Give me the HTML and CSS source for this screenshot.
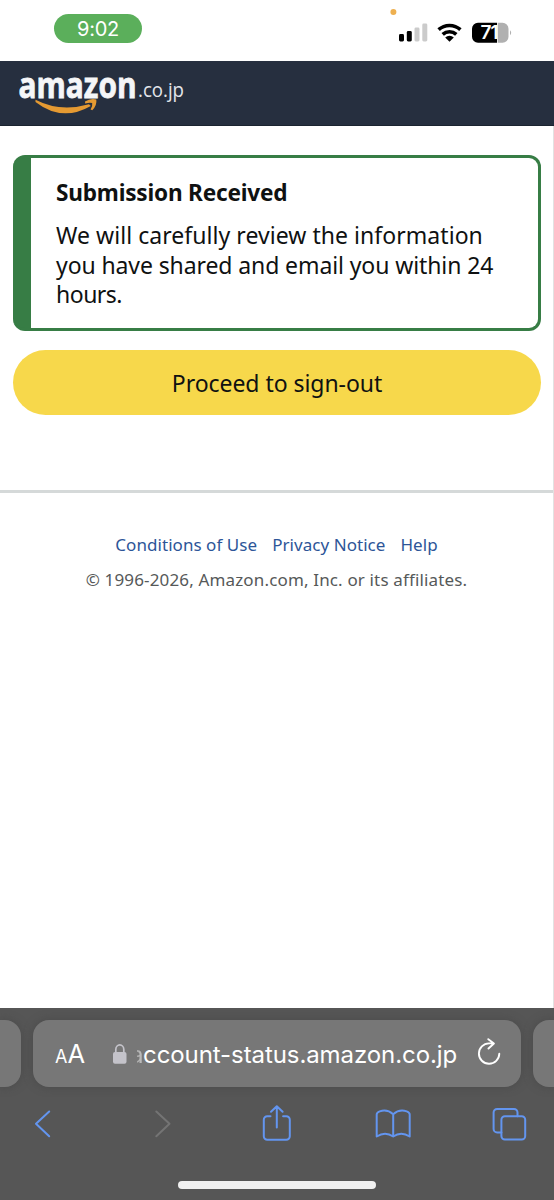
FILE: index.html
```html
<!DOCTYPE html>
<html lang="en">
<head>
<meta charset="utf-8">
<title>Submission Received</title>
<link rel="stylesheet" href="styles.css">
</head>
<body>
<div class="screen">
  <header class="status">
    <span class="clock">9:02</span>
    <svg class="indicators" width="120" height="40" viewBox="0 0 120 40" aria-hidden="true">
      <circle cx="3.4" cy="7" r="3" fill="#eeb050"/>
      <rect x="9" y="29" width="5" height="7.5" rx="1.4"/>
      <rect x="16.8" y="26" width="5" height="10.5" rx="1.4"/>
      <rect x="24.5" y="22.5" width="5" height="14" rx="1.4" fill="#cbcbcb"/>
      <rect x="32.3" y="18.5" width="5" height="18" rx="1.4" fill="#cbcbcb"/>
      <g fill="none" stroke="#000" stroke-width="3.6">
        <path d="M48.6 24.7a16.2 16.2 0 0 1 21.8 0"/>
        <path d="M52.7 29.3a10.2 10.2 0 0 1 13.6 0"/>
      </g>
      <path d="M59.5 36.7l-4.3-4.2a6.2 6.2 0 0 1 8.6 0z"/>
      <path d="M88 17.8h19v20H88a6 6 0 0 1-6-6v-8a6 6 0 0 1 6-6z"/>
      <path d="M107.7 17.8h4.8a6 6 0 0 1 6 6v8a6 6 0 0 1-6 6h-4.8z" fill="#b0b0b0"/>
      <text class="charge" x="90.5" y="34.3" textLength="18">71</text>
      <path d="M120 25.3q2.4 2.5 0 5z" fill="#b0b0b0"/>
    </svg>
  </header>
  <div class="brand">
    <svg width="180" height="55" viewBox="0 0 180 55" role="img" aria-label="amazon.co.jp">
      <text class="brand-name" x="8.5" y="33" textLength="118" lengthAdjust="spacingAndGlyphs">amazon</text>
      <text class="brand-tld" x="128" y="32" textLength="46" lengthAdjust="spacingAndGlyphs">.co.jp</text>
      <path d="M25.5 34.8Q50 47.5 79 39.3l1.8 1.7Q52 57.5 25.5 37z" fill="#e59a32"/>
      <path d="M75 36.5q5.5-3.6 11.3-2.1.9 5.6-4 10.8l-1.7-.6q2.2-4.2 1.6-6.7-2.9-.6-7 .5z" fill="#e59a32"/>
    </svg>
  </div>
  <main>
    <section class="notice">
      <h1>Submission Received</h1>
      <p><span class="l1">We will carefully review the information</span><br><span class="l2">you have shared and email you within 24</span><br><span class="l3">hours.</span></p>
    </section>
    <button class="signout" type="button">Proceed to sign-out</button>
  </main>
  <footer class="footer">
    <nav><a>Conditions of Use</a><a>Privacy Notice</a><a>Help</a></nav>
    <p>© 1996-2026, Amazon.com, Inc. or its affiliates.</p>
  </footer>
  <div class="browser">
    <div class="tabs">
      <div class="tab previous"></div>
      <div class="tab address">
        <span class="reader"><small>A</small>A</span>
        <svg class="lock" width="14" height="20" viewBox="0 0 14 20"><rect y="8" width="13.5" height="11.8" rx="2" fill="#c4c3ca"/><path d="M2.8 9V5.4a4 4.5 0 0 1 8 0V9" fill="none" stroke="#c4c3ca" stroke-width="1.7"/></svg>
        <span class="url"><span class="fade">a</span>ccount-status.amazon.co.jp</span>
        <svg class="reload" width="24" height="28" viewBox="0 0 24 28" fill="none" stroke="#fff" stroke-width="1.9" stroke-linecap="round" stroke-linejoin="round"><path d="M22.3 15.8A10.2 10.2 0 1 1 12 5.4h4.8M11.3 1.2l5.6 4.3-5.4 5"/></svg>
      </div>
      <div class="tab next"></div>
    </div>
    <svg class="tools" width="554" height="50" viewBox="0 0 554 50" fill="none" stroke="#6395ef" stroke-width="2" stroke-linecap="round" stroke-linejoin="round">
      <path d="M49.2 14.5 36 26.8 49.2 39.3"/>
      <path d="M156.3 14.5 169.5 26.8 156.3 39.3" stroke="#747474"/>
      <path d="M270.5 19.3h-3.2a3.5 3.5 0 0 0-3.5 3.5v16.4a3.5 3.5 0 0 0 3.5 3.5h19a3.5 3.5 0 0 0 3.5-3.5V22.8a3.5 3.5 0 0 0-3.5-3.5h-3.2M276.8 30.5V9.5M271 14.8l5.8-5.6 5.8 5.6"/>
      <path d="M393.2 39.5V17.2q-6-5.3-13.5-2.8-3 1-3 3.2v21.9q8.5-5.5 16.5 0 8-5.5 16.5 0V17.6q0-2.2-3-3.2-7.5-2.5-13.5 2.8"/>
      <rect x="501.4" y="19.3" width="23.8" height="23.2" rx="3.5"/>
      <path d="M501.4 35.4h-4.3a3.5 3.5 0 0 1-3.5-3.5V15.4a3.5 3.5 0 0 1 3.5-3.5H514a3.5 3.5 0 0 1 3.5 3.5v3.9"/>
    </svg>
    <div class="home"></div>
  </div>
</div>
</body>
</html>
```
FILE: styles.css
```css
* { box-sizing: border-box; }
body { margin: 0; background: #fff; color: #0f1111; font-family: "Noto Sans", sans-serif; }
h1, p { margin: 0; }
.screen { width: 554px; height: 1200px; display: flex; flex-direction: column; overflow: hidden; }
.status { height: 61px; flex: none; display: flex; justify-content: space-between; padding: 14px 43px 0 54px; }
.clock { width: 88px; height: 29px; border-radius: 15px; background: #5baf5b; color: #fff; font: 20px/30px Inter, sans-serif; letter-spacing: -0.3px; text-align: center; }
.indicators { margin-top: -9px; overflow: visible; margin-right: 1px; }
.charge { font: 600 19px Inter, sans-serif; fill: #fff; }
.brand { height: 65px; flex: none; background: #262f3f; border-bottom: 1px solid #1b2430; padding: 4px 10px; }
.brand svg { display: block; overflow: visible; }
.brand-name { font: 700 35px "Open Sans", sans-serif; fill: #f5f6f8; stroke: #f5f6f8; stroke-width: 0.8px; }
.brand-tld { font: 20px "Open Sans", sans-serif; fill: #e3e6eb; }
main { padding: 29px 12px 0 13px; flex: none; border-right: 1px solid #e2e2e2; }
.notice { height: 176px; border: 3px solid #377d45; border-left-width: 0; border-radius: 12px; padding: 20px 10px 0 43px; white-space: nowrap; background: linear-gradient(90deg, #377d45 18px, #fff 18px) border-box; }
h1 { font-size: 22.6px; line-height: 30px; font-weight: 700; letter-spacing: -0.2px; margin-bottom: 13px; }
.notice p { font-size: 23px; line-height: 29.5px; }
.l1 { letter-spacing: 0.05px; }
.l2 { letter-spacing: -0.1px; }
.l3 { letter-spacing: -0.5px; }
.signout { display: block; width: 100%; height: 65px; margin-top: 19px; border: 0; border-radius: 33px; background: #f7d84b; color: #0f1111; font: 23px "Noto Sans", sans-serif; letter-spacing: -0.05px; padding: 0; }
.footer { flex: 1; padding-top: 75px; border-right: 1px solid #e2e2e2; text-align: center; font-size: 17px; line-height: 27px; color: #565959; }
.footer::before { content: ""; display: block; height: 3px; background: #d5d9d9; margin-bottom: 38px; }
.footer nav { display: flex; justify-content: center; gap: 15px; color: #2d5598; margin-bottom: 8px; letter-spacing: 0.05px; }
.footer p { letter-spacing: 0.15px; }
.browser { height: 192px; flex: none; background: #565656; display: flex; flex-direction: column; align-items: center; padding-top: 12px; }
.tabs { width: 554px; display: flex; gap: 12px; margin-bottom: 10px; }
.tab { height: 67px; background: #777; border-radius: 16px; box-shadow: 0 0 8px #4a4a4a; flex: none; }
.previous { width: 21px; border-radius: 0 16px 16px 0; }
.next { width: 21px; border-radius: 16px 0 0 16px; }
.address { width: 488px; display: flex; align-items: center; color: #fff; font-family: Inter, sans-serif; padding-left: 22px; }
.reader { font-size: 25.5px; width: 58px; line-height: 30px; white-space: nowrap; padding-top: 3px; }
.reader small { font-size: 18px; }
.lock { flex: none; }
.url { font-size: 24px; width: 327px; margin-left: 3px; white-space: nowrap; line-height: 30px; padding-top: 2px; letter-spacing: -0.08px; }
.fade { display: inline-block; width: 13px; -webkit-mask-image: linear-gradient(90deg, transparent 50%, rgba(0,0,0,.35) 52%, rgba(0,0,0,.6)); mask-image: linear-gradient(90deg, transparent 50%, rgba(0,0,0,.35) 52%, rgba(0,0,0,.6)); }
.reload { margin-left: 20px; flex: none; margin-top: -4px; }
.tools { display: block; }
.home { width: 198px; height: 8px; border-radius: 4px; background: #f0f0f0; margin-top: 34px; flex: none; }
```
